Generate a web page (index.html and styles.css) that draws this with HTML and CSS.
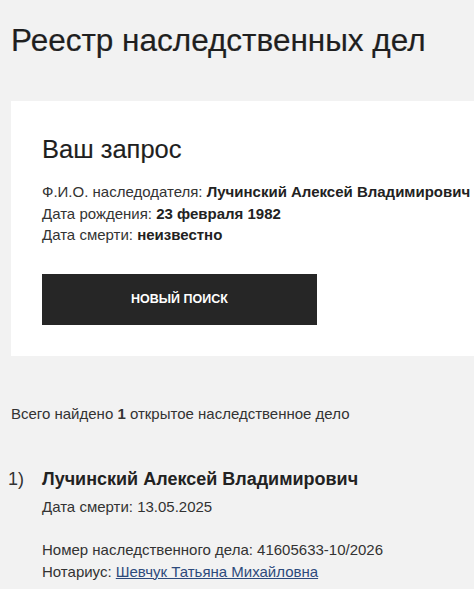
FILE: index.html
```html
<!DOCTYPE html>
<html lang="ru">
<head>
<meta charset="utf-8">
<link rel="stylesheet" href="styles.css">
</head>
<body>
<div class="page">
  <h1 class="title">Реестр наследственных дел</h1>
  <section class="card">
    <h2 class="card-title">Ваш запрос</h2>
    <div class="query">
      <div>Ф.И.О. наследодателя: <b>Лучинский Алексей Владимирович</b></div>
      <div>Дата рождения: <b>23 февраля 1982</b></div>
      <div>Дата смерти: <b>неизвестно</b></div>
    </div>
    <button class="btn">Новый поиск</button>
  </section>
  <p class="summary">Всего найдено <b>1</b> открытое наследственное дело</p>
  <div class="result">
    <div class="num">1)</div>
    <div class="result-body">
      <div class="name">Лучинский Алексей Владимирович</div>
      <div class="death">Дата смерти: 13.05.2025</div>
      <div class="info">
        <div>Номер наследственного дела: 41605633-10/2026</div>
        <div>Нотариус: <a href="#" class="link">Шевчук Татьяна Михайловна</a></div>
      </div>
    </div>
  </div>
</div>
</body>
</html>
```

FILE: styles.css
```css
html, body {
  margin: 0;
  padding: 0;
  background: #f2f2f2;
  overflow: hidden;
}
body {
  font-family: "Liberation Sans", Arial, sans-serif;
  color: #222;
}
.page {
  padding: 0 0 0 11px;
}
.title {
  margin: 0;
  padding-top: 20px;
  font-size: 31.5px;
  font-weight: normal;
  line-height: 40px;
  color: #1f1f1f;
  -webkit-text-stroke: 0.2px #1f1f1f;
}
.card {
  margin-top: 41px;
  background: #fff;
  padding: 33px 0 30px 31px;
  box-sizing: border-box;
  height: 255px;
  white-space: nowrap;
}
.card-title {
  margin: 0;
  font-size: 25.5px;
  font-weight: normal;
  line-height: 30px;
  color: #1f1f1f;
  -webkit-text-stroke: 0.15px #1f1f1f;
}
.query {
  margin-top: 17px;
  font-size: 15px;
  line-height: 21.5px;
  color: #333;
}
.query b {
  color: #222;
}
.btn {
  margin-top: 28px;
  width: 275px;
  height: 51px;
  background: #262626;
  color: #fff;
  border: 0;
  font-family: "Liberation Sans", Arial, sans-serif;
  font-weight: bold;
  font-size: 12.5px;
  text-transform: uppercase;
  display: block;
}
.summary {
  margin: 48px 0 0 0;
  font-size: 15px;
  line-height: 20px;
  color: #333;
}
.result {
  display: flex;
  margin-top: 43px;
  margin-left: -3px;
}
.num {
  width: 34px;
  font-size: 18px;
  line-height: 24px;
  color: #333;
}
.name {
  font-size: 18px;
  font-weight: bold;
  line-height: 24px;
  color: #222;
}
.death {
  margin-top: 6px;
  font-size: 15px;
  line-height: 20px;
  color: #333;
}
.info {
  margin-top: 22px;
  font-size: 15px;
  line-height: 21.5px;
  color: #333;
}
.link {
  color: #2d4a7c;
}
```
